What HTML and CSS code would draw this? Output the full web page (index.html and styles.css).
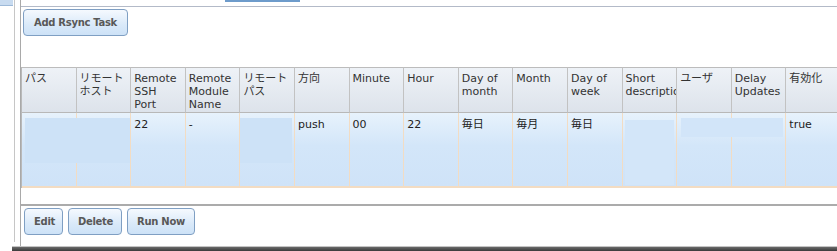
FILE: index.html
```
<!DOCTYPE html>
<html lang="ja">
<head>
    <meta charset="UTF-8">
    <title>Rsync Tasks</title>
    <link rel="stylesheet" href="styles.css">
</head>
<body>
<div class="frame">
    <div class="side">
        <div class="side-tab"></div>
    </div>
    <div class="panel">
        <div class="tabs-row">
            <div class="top-tab"></div>
        </div>
        <div class="panel-body">
            <div class="top-actions">
                <button class="btn">Add Rsync Task</button>
            </div>
            <div class="grid-wrap">
                <table class="grid">
                    <thead>
                    <tr>
                        <th>パス</th>
                        <th>リモートホスト</th>
                        <th>Remote SSH Port</th>
                        <th>Remote Module Name</th>
                        <th>リモートパス</th>
                        <th>方向</th>
                        <th>Minute</th>
                        <th>Hour</th>
                        <th>Day of month</th>
                        <th>Month</th>
                        <th>Day of week</th>
                        <th>Short description</th>
                        <th>ユーザ</th>
                        <th>Delay Updates</th>
                        <th>有効化</th>
                    </tr>
                    </thead>
                    <tbody>
                    <tr class="selected">
                        <td></td>
                        <td></td>
                        <td>22</td>
                        <td>-</td>
                        <td></td>
                        <td>push</td>
                        <td>00</td>
                        <td>22</td>
                        <td>毎日</td>
                        <td>毎月</td>
                        <td>毎日</td>
                        <td></td>
                        <td></td>
                        <td></td>
                        <td>true</td>
                    </tr>
                    </tbody>
                </table>
                <!-- hidden values -->
                <span class="mask mask-path"></span>
                <span class="mask mask-rpath"></span>
                <span class="mask mask-desc"></span>
                <span class="mask mask-user"></span>
            </div>
            <div class="toolbar">
                <button class="btn">Edit</button>
                <button class="btn">Delete</button>
                <button class="btn">Run Now</button>
            </div>
        </div>
    </div>
</div>
<div class="bottom-bar"></div>
</body>
</html>
```

FILE: styles.css
```
*{
    margin: 0;
    padding: 0;
    box-sizing: border-box;
}
html, body{
    width: 837px;
    height: 251px;
    overflow: hidden;
    background: #fff;
}
body{
    font-family: "DejaVu Sans", Verdana, "Noto Sans CJK JP", sans-serif;
    font-size: 11px;
    color: #333;
}
.frame{
    display: flex;
    height: 246px;
}
.side{
    width: 15px;
    height: 242px;
    border-right: 1px solid #c6c6c6;
    flex: none;
}
.side-tab{
    width: 13px;
    height: 6px;
    background: #c8dbf0;
    border-bottom: 1px solid #9db9d8;
}
.panel{
    margin-left: 5px;
    flex: 1;
    min-width: 0;
    border-left: 1px solid #a9a9a9;
    overflow: hidden;
}
.tabs-row{
    height: 6px;
}
.top-tab{
    margin-left: 204px;
    width: 75px;
    height: 2px;
    background: #6d9bcb;
}
.panel-body{
    border-top: 1px solid #b3bac8;
}
.top-actions{
    padding: 2px 0 0 2px;
    height: 60px;
}
.btn{
    height: 27px;
    padding: 0 9px;
    border: 1px solid #7f9fc3;
    border-radius: 4px;
    background: linear-gradient(#f5f9fe, #d9e9f9 60%, #cde2f7);
    color: #585858;
    font-family: "DejaVu Sans", Verdana, sans-serif;
    font-size: 10px;
    font-weight: bold;
    letter-spacing: -0.3px;
}
.top-actions .btn{
    width: 105px;
}
.grid-wrap{
    position: relative;
    width: 820px;
}
.grid{
    width: 820px;
    table-layout: fixed;
    border-collapse: separate;
    border-spacing: 0;
    border-left: 1px solid #b9b9b9;
}
.grid th{
    height: 46px;
    padding: 4px 5px 0 3px;
    text-align: left;
    vertical-align: top;
    font-weight: normal;
    line-height: 13px;
    color: #333;
    background: linear-gradient(#eef2f7, #dde3eb);
    border-top: 1px solid #bcbcbc;
    border-right: 1px solid #c2c2c2;
    border-bottom: 1px solid #b8b8b8;
    overflow: hidden;
}
.grid td{
    height: 75px;
    padding: 5px 5px 0 3px;
    vertical-align: top;
    line-height: 13px;
    color: #222;
    border-right: 1px solid #f2dcc3;
    border-bottom: 2px solid #f3dcc2;
    overflow: hidden;
}
.selected td{
    background: linear-gradient(#e7f2fc, #d3e6f9 45%, #cfe3f8);
}
.mask{
    position: absolute;
    background: #cde2f7;
}
.mask-path{
    left: 4px;
    top: 51px;
    width: 105px;
    height: 45px;
}
.mask-rpath{
    left: 219px;
    top: 51px;
    width: 52px;
    height: 45px;
}
.mask-desc{
    left: 604px;
    top: 53px;
    width: 49px;
    height: 65px;
    background: #d3e6f9;
}
.mask-user{
    left: 660px;
    top: 51px;
    width: 102px;
    height: 19px;
    background: #d2e5f9;
}
.toolbar{
    margin-top: 16px;
    border-top: 2px solid #ababab;
    padding: 2px 0 0 3px;
    display: flex;
    gap: 5px;
}
.toolbar .btn:nth-child(1){ width: 39px; }
.toolbar .btn:nth-child(2){ width: 54px; }
.toolbar .btn:nth-child(3){ width: 68px; }
.bottom-bar{
    margin-left: 12px;
    height: 5px;
    border-top: 1px solid #c4c4c4;
    background: linear-gradient(#6a6a6a, #3a3a3a);
}
```
